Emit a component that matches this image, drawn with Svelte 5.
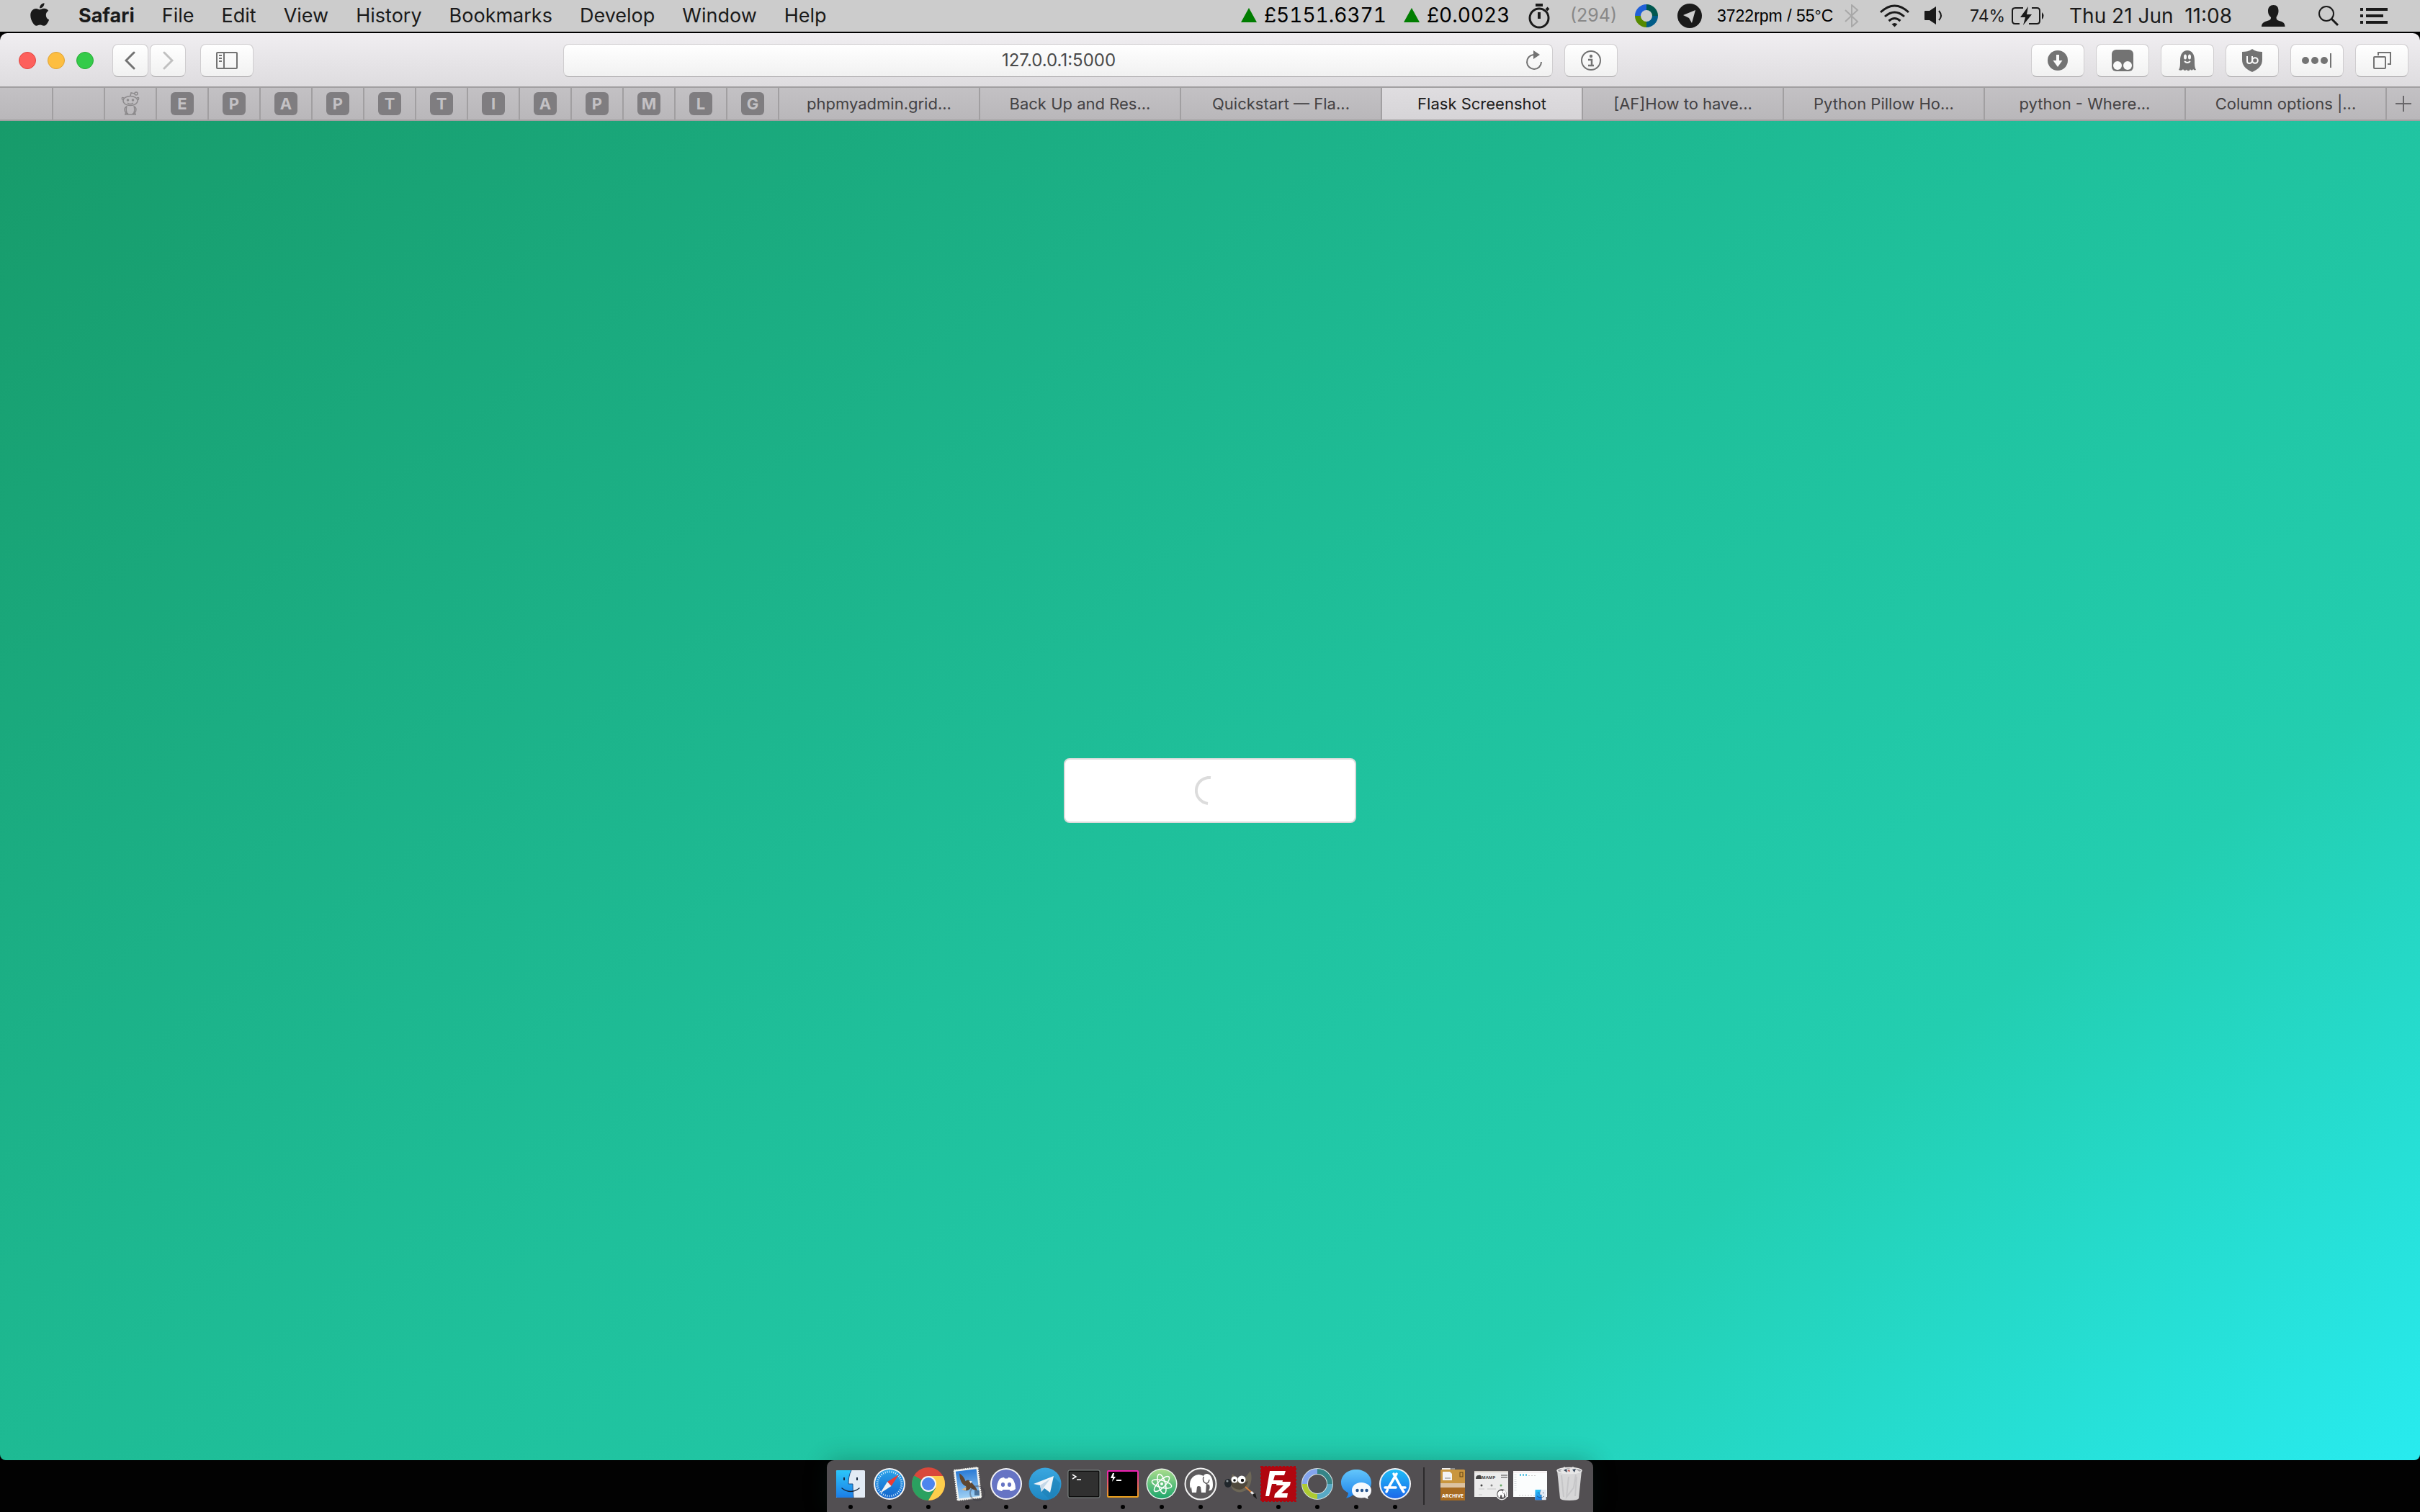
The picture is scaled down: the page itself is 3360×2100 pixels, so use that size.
<script>
  const menus = ['File', 'Edit', 'View', 'History', 'Bookmarks', 'Develop', 'Window', 'Help'];
  const pinned = ['', '', 'reddit', 'E', 'P', 'A', 'P', 'T', 'T', 'I', 'A', 'P', 'M', 'L', 'G'];
  const tabs = [
    'phpmyadmin.grid...',
    'Back Up and Res...',
    'Quickstart — Fla...',
    'Flask Screenshot',
    '[AF]How to have...',
    'Python Pillow Ho...',
    'python - Where...',
    'Column options |...'
  ];
  const active = 3;
  const extensions = ['downloads', 'tampermonkey', 'ghostery', 'ublock', 'lastpass', 'tabs'];
  const apps = [
    ['finder', true],
    ['safari', true],
    ['chrome', true],
    ['mail', true],
    ['discord', true],
    ['telegram', true],
    ['terminal', false],
    ['hyper', true],
    ['atom', true],
    ['mamp', true],
    ['gimp', true],
    ['filezilla', true],
    ['monitor', true],
    ['messages', true],
    ['appstore', true]
  ];
  const stacks = ['archive', 'mampwindow', 'finderwindow', 'trash'];
  const ticks = Array.from({ length: 36 }, (_, i) => i * 10);
  let url = $state('127.0.0.1:5000');
</script>

{#snippet extIcon(name)}
  <svg width="44" height="36" viewBox="0 0 44 36" aria-hidden="true">
    {#if name === 'downloads'}
      <circle cx="22" cy="18" r="14" fill="#737373" />
      <path d="M20 10h4v8h4.500l-6.500 9-6.500-9H20z" fill="#fafafa" />
    {:else if name === 'tampermonkey'}
      <rect x="7" y="3" width="30" height="30" rx="6" fill="#737373" />
      <circle cx="15" cy="25" r="6" fill="#fafafa" /><circle cx="29" cy="25" r="6" fill="#fafafa" />
    {:else if name === 'ghostery'}
      <path d="M10 31c2-3 2-7 2-13C12 9 16 4 22 4s10 5 10 14c0 6 0 10 2 13-2 1-3 0-4-1-1 2-3 2-4 0-1 3-4 3-5 .5-1 2-4 2-5-.5-1 2-4 2-6 1z" fill="#737373" />
      <ellipse cx="19" cy="13" rx="2" ry="3.500" fill="#fafafa" /><ellipse cx="25" cy="13" rx="2" ry="3.500" fill="#fafafa" />
      <path d="M18 19q4 4 8 0" fill="none" stroke="#fafafa" stroke-width="2" />
    {:else if name === 'ublock'}
      <path d="M22 2c4 3 9 4 14 4v11c0 8-5 13-14 17C13 30 8 25 8 17V6c5 0 10-1 14-4z" fill="#737373" />
      <path d="M15 12v7q0 3 3 3t4-3v-7" fill="none" stroke="#fafafa" stroke-width="2" />
      <circle cx="26" cy="18" r="3.800" fill="none" stroke="#fafafa" stroke-width="2" />
    {:else if name === 'lastpass'}
      <circle cx="6" cy="18" r="5" fill="#737373" /><circle cx="19" cy="18" r="5" fill="#737373" /><circle cx="32" cy="18" r="5" fill="#737373" />
      <path d="M41 8v20" stroke="#737373" stroke-width="2" />
    {:else}
      <path d="M17 11V7h17v16h-4" fill="none" stroke="#737373" stroke-width="2" />
      <rect x="11" y="13" width="16" height="16" rx="1" fill="none" stroke="#737373" stroke-width="2" />
    {/if}
  </svg>
{/snippet}

{#snippet elephant()}
  <path d="M10 31c-3-10 1-19 11-20 3 0 5 1 7 2 1-3 5-4 8-2 4 3 5 9 5 14 0 6-2 9-6 8 2-2 2-5 1-8-2 0-3-1-4-2l-1 13h-6l-1-8q-3-2-5 0l-1 8h-6l-1-8z" fill="#fff" />
  <path d="M28 14q-2 7 3 9 4 1 5-5" fill="none" stroke="#5c5a5c" stroke-width="1.500" />
{/snippet}

{#snippet finderFace()}
  <rect x="4" y="5" width="40" height="38" rx="1.500" fill="#e3ebf5" />
  <path d="M5.500 5H25c-3 6-4 12-4 19h6c0 7 0 13 1 19H5.500Q4 43 4 41.500v-35Q4 5 5.500 5z" fill="url(#finderBlue)" />
  <path d="M25 5c-3 6-4 12-4 19h6q0 10 1 19" fill="none" stroke="#1b4e8a" stroke-width="1" />
  <path d="M15 15v4M33 15v4" stroke="#16263c" stroke-width="2" />
  <path d="M12 30q12 9 24 0" fill="none" stroke="#16263c" stroke-width="1.500" stroke-linecap="round" />
{/snippet}

{#snippet dockIcon(name)}
  <svg width="50" height="50" viewBox="-1 -1 50 50" aria-hidden="true">
    {#if name === 'finder'}
      {@render finderFace()}
    {:else if name === 'safari'}
      <circle cx="24" cy="24" r="22" fill="#f4f4f6" />
      <circle cx="24" cy="24" r="20" fill="url(#safariBlue)" />
      {#each ticks as a}
        <path d="M24 5.500v3" stroke="#d8f1ff" stroke-width="1" transform="rotate({a} 24 24)" />
      {/each}
      <path d="M37 11 26.500 27 21 21z" fill="#ee3b34" /><path d="M11 37 21 21l5.500 6z" fill="#f2f2f2" />
    {:else if name === 'chrome'}
      <circle cx="24" cy="24" r="23" fill="#d9483b" />
      <path d="M24 24 4.100 12.500A23 23 0 0 0 24 47l10-17z" fill="#2aa160" />
      <path d="M24 13h20.200A23 23 0 0 1 24 47l10-17z" fill="#fdce4c" />
      <path d="M14 29 4.100 12.500 24 24z" fill="#2aa160" />
      <circle cx="24" cy="24" r="11" fill="#f5f5f5" /><circle cx="24" cy="24" r="9" fill="#4c86ee" />
    {:else if name === 'mail'}
      <g transform="rotate(-7 24 24)">
        <rect x="8" y="3" width="33" height="42" fill="#f4f4f0" stroke="#f4f4f0" stroke-width="2" stroke-dasharray="2 1" />
        <rect x="10" y="5" width="29" height="38" fill="url(#mailSky)" />
        <path d="M15 8c3 3 6 6 7 12 3-2 5-1 7 1 3 4 6 8 8 14-4-1-7-3-9-5-2 3-6 4-10 2l4-5c-6-3-8-11-7-19z" fill="#5e4630" />
        <path d="m27 20 4 1-2 3z" fill="#eee" /><path d="m15 31 7-3-1 5z" fill="#d7b98c" />
      </g>
      <circle cx="38" cy="37" r="10" fill="none" stroke="#3b3b45" stroke-opacity=".4" stroke-width="2" />
      <rect x="34" y="33" width="7" height="7" fill="#1d3a60" opacity=".6" />
    {:else if name === 'discord'}
      <circle cx="24" cy="24" r="22" fill="#f4f4f6" /><circle cx="24" cy="24" r="20" fill="#6674c4" />
      <path d="M15 17q4-2.500 6-2l1 1.500h4l1-1.500q2-.5 6 2 4 6 4 14-3 3-7 3l-1.500-2h-9L18 34q-4 0-7-3 0-8 4-14z" fill="#fff" />
      <ellipse cx="19.500" cy="25" rx="2.600" ry="2.900" fill="#6674c4" /><ellipse cx="28.500" cy="25" rx="2.600" ry="2.900" fill="#6674c4" />
    {:else if name === 'telegram'}
      <circle cx="24" cy="24" r="22.500" fill="url(#telegramBlue)" />
      <path d="m36 14 9 9-3 13-11 10-14-13z" fill="#1c7db2" opacity=".5" />
      <path d="m8 24 28-11-5 23-8-6-4 5-2-9z" fill="#f1f5f9" /><path d="m17 26 14-9-9 12-3 6z" fill="#c4d8e8" />
    {:else if name === 'terminal'}
      <rect x="3" y="6" width="42" height="36" rx="1" fill="#303030" stroke="#0d0d0d" stroke-width="2" />
      <rect x="2" y="5" width="44" height="38" rx="2" fill="none" stroke="#87908d" stroke-width="1" />
      <path d="m8 11 5 3-5 3M14 18h6" fill="none" stroke="#fff" stroke-width="1.500" />
    {:else if name === 'hyper'}
      <rect x="3" y="6" width="42" height="36" rx="1" fill="#000" stroke="url(#hyperEdge)" stroke-width="2" />
      <path d="m10 9-3 7h3l-1 5 5-7h-3l1-5z" fill="#fff" /><path d="M15 19h7" stroke="#fff" stroke-width="2" />
    {:else if name === 'atom'}
      <circle cx="24" cy="24" r="21.500" fill="#eaf4ee" /><circle cx="24" cy="24" r="20" fill="url(#atomGreen)" />
      {#each [0, 60, 120] as a}
        <ellipse cx="24" cy="24" rx="5" ry="14" fill="none" stroke="#fff" stroke-width="1.500" transform="rotate({a - 15} 24 24)" />
      {/each}
      <circle cx="24" cy="24" r="2" fill="#fff" />
    {:else if name === 'mamp'}
      <circle cx="24" cy="24" r="21.500" fill="#5c5a5c" stroke="#f4f4f4" stroke-width="2" />
      {@render elephant()}
    {:else if name === 'gimp'}
      <path d="M2 20c6 2 9 0 11-4l1-6 6 5q6 2 12 0l7-9c3 8 2 20-5 26-8 6-20 4-22-6q-6 0-8-3z" fill="#6d6757" />
      <path d="M15 20q9 6 21 0-3 11-12 12-9-1-12-7z" fill="#4f493d" />
      <circle cx="17" cy="18" r="4.500" fill="#fff" /><circle cx="27" cy="18" r="5.500" fill="#fff" />
      <circle cx="17" cy="19" r="1.800" fill="#111" /><circle cx="28" cy="19" r="2.200" fill="#111" />
      <ellipse cx="8" cy="23" rx="5" ry="6" fill="#20262b" /><circle cx="7" cy="20" r="1.600" fill="#8a949a" />
      <path d="m32 28 10 9" stroke="#d9823a" stroke-width="2" /><path d="m40 35 4 4" stroke="#eee" stroke-width="3" /><path d="m42 38 4-1 2 8-5-4z" fill="#1b1b1b" />
    {:else if name === 'filezilla'}
      <rect x="0" y="0" width="48" height="48" fill="#b1060f" stroke="#b1060f" stroke-width="2" stroke-dasharray="3 2" />
      <path d="M12 6h22l-2 6H19l-2 7h13l-1 5H15l-4 17H6z" fill="#fff" />
      <path d="M22 21h19l-1 5-12 11h9l-1 6H18l1-5 12-12H21z" fill="#fff" />
    {:else if name === 'monitor'}
      <circle cx="24" cy="24" r="17.500" fill="none" stroke="#d6e2e2" stroke-width="9" />
      <path d="M24 6.500A17.500 17.500 0 0 1 41.500 24" fill="none" stroke="#358487" stroke-width="7" />
      <path d="M41.500 24A17.500 17.500 0 0 1 24 41.500" fill="none" stroke="#58a9c6" stroke-width="7" />
      <path d="M24 41.500A17.500 17.500 0 0 1 6.500 24" fill="none" stroke="#aecb32" stroke-width="7" />
      <path d="M6.500 24A17.500 17.500 0 0 1 24 6.500" fill="none" stroke="#84a5ee" stroke-width="7" />
    {:else if name === 'messages'}
      <path d="M24 4c12 0 21 8 21 18S36 40 24 40q-3 0-5-.5-3 3-9 4 3-3 3-7C6 33 3 28 3 22 3 12 12 4 24 4z" fill="url(#messageBlue)" />
      <path d="M31 22c8 0 14 5 14 11 0 4-2 7-5 9 0 1 0 2 1 3q-4-1-5-2c-11 2-18-3-18-10 0-6 5-11 13-11z" fill="#f7f9fc" />
      <circle cx="25.500" cy="33" r="2.200" fill="#27548d" /><circle cx="32" cy="33" r="2.200" fill="#27548d" /><circle cx="38.500" cy="33" r="2.200" fill="#27548d" />
    {:else if name === 'appstore'}
      <circle cx="24" cy="24" r="22" fill="#f4f4f6" /><circle cx="24" cy="24" r="20" fill="url(#storeBlue)" />
      <path d="M26 10 15.500 28M13.500 32 12 35M22 10l12 22 2 3M10 29h15M32 29h6" fill="none" stroke="#fff" stroke-width="3.500" stroke-linecap="round" />
    {:else if name === 'archive'}
      <path d="M9 2h12v4H9z" fill="#efefef" /><path d="M22 2h5v4h-5z" fill="#8c8c8c" />
      <rect x="7" y="4" width="34" height="43" rx="1.500" fill="#c9963f" />
      <rect x="7" y="28" width="34" height="19" rx="1.500" fill="#a76b22" />
      <rect x="7" y="23" width="34" height="6" fill="#dcc3a2" />
      <path d="M10 7h10l3 3v9H10z" fill="#f3f3f3" /><path d="M13 16h8" stroke="#bbb" stroke-width="2" />
      <rect x="34" y="8" width="4" height="6" fill="none" stroke="#604315" />
      <text x="24" y="43" text-anchor="middle" class="archive-label">ARCHIVE</text>
    {:else if name === 'mampwindow'}
      <rect x="0" y="6" width="47" height="36" fill="#ececec" /><path d="M0 7h47" stroke="#d5cfc9" stroke-width="2" />
      <path d="M2 17q0-5 4-5 4-1 4 4v1z" fill="#444" />
      <text x="10" y="17" class="mamp-label">MAMP</text>
      <path d="M37 12h9M37 15h9" stroke="#999" stroke-width="2" />
      <circle cx="10" cy="26" r="1.500" fill="#444" /><circle cx="24" cy="26" r="1.500" fill="#888" /><circle cx="37" cy="26" r="1.500" fill="#67a867" />
      <path d="M6 31h8M18 31h12M34 31h5M6 39h5" stroke="#c6c6c6" />
      <g transform="translate(29 29) scale(.38)"><circle cx="24" cy="24" r="20" fill="#4c4a4c" stroke="#eee" stroke-width="4" />{@render elephant()}</g>
    {:else if name === 'finderwindow'}
      <rect x="0" y="6" width="47" height="36" fill="#fbfdfd" /><path d="M0 7.500h47" stroke="#ead9dd" stroke-width="1" />
      <path d="M3 11v24" stroke="#d8dde0" stroke-width="3" stroke-dasharray="1 2" />
      <path d="M9 11.500h10" stroke="#65c6e4" stroke-width="3" stroke-dasharray="2 2" /><path d="M21 12.500h11M8 40h22" stroke="#ccc" stroke-dasharray="2 2" />
      <g transform="translate(29 30) scale(.38)">{@render finderFace()}</g>
    {:else}
      <path d="M7 5h34l-4 39q-1 3-13 3t-13-3z" fill="#d6d6d7" />
      <path d="m13 12 3 30M23 14l-3 28 10-13 3-18M34 14l-2 27" fill="none" stroke="#c6c6c8" stroke-width="2" />
      <ellipse cx="24" cy="5.500" rx="17" ry="4" fill="#a5a5a8" stroke="#ececec" stroke-width="1.500" />
      <path d="m11 6 6-6 5 4 7-4 5 4 4 3-6 3H17z" fill="#e6e6e6" /><path d="m16 5 4-2 1 5zM28 4l5-1-2 5z" fill="#36465a" /><path d="m21 6 3-2 1 3z" fill="#c1574c" />
    {/if}
  </svg>
{/snippet}

<svg class="defs" width="0" height="0" aria-hidden="true">
  <defs>
    <linearGradient id="finderBlue" x1="0" y1="0" x2="0" y2="1"><stop offset="0" stop-color="#2bc6fa" /><stop offset="1" stop-color="#1c7de6" /></linearGradient>
    <linearGradient id="safariBlue" x1="0" y1="0" x2="0" y2="1"><stop offset="0" stop-color="#2aa3ea" /><stop offset="1" stop-color="#1464cc" /></linearGradient>
    <linearGradient id="mailSky" x1="0" y1="0" x2="0" y2="1"><stop offset="0" stop-color="#2a7bd6" /><stop offset="1" stop-color="#9fd0f4" /></linearGradient>
    <linearGradient id="telegramBlue" x1="0" y1="0" x2="0" y2="1"><stop offset="0" stop-color="#3aa7e0" /><stop offset="1" stop-color="#1f87c2" /></linearGradient>
    <linearGradient id="hyperEdge" x1="0" y1="0" x2="0" y2="1"><stop offset="0" stop-color="#ee1fb4" /><stop offset="1" stop-color="#eca11c" /></linearGradient>
    <linearGradient id="atomGreen" x1="0" y1="0" x2="0" y2="1"><stop offset="0" stop-color="#a8dc8c" /><stop offset="1" stop-color="#1ea66c" /></linearGradient>
    <linearGradient id="messageBlue" x1="0" y1="0" x2="0" y2="1"><stop offset="0" stop-color="#63c6fb" /><stop offset="1" stop-color="#1d82ec" /></linearGradient>
    <linearGradient id="storeBlue" x1="0" y1="0" x2="0" y2="1"><stop offset="0" stop-color="#1fbdf8" /><stop offset="1" stop-color="#1c68ea" /></linearGradient>
  </defs>
</svg>

<div class="desktop">
  <header class="menubar">
    <nav class="menus" aria-label="Menu bar">
      <button class="menu" aria-label="Apple">
        <svg width="29" height="32" viewBox="2 0 22 24"><path fill="#1a1a1a" d="M12.152 6.896c-.948 0-2.415-1.078-3.960-1.040-2.040.027-3.910 1.183-4.961 3.014-2.117 3.675-.546 9.103 1.519 12.090 1.013 1.454 2.208 3.090 3.792 3.039 1.520-.065 2.090-.987 3.935-.987 1.831 0 2.350.987 3.960.948 1.637-.026 2.676-1.480 3.676-2.948 1.156-1.688 1.636-3.325 1.662-3.415-.039-.013-3.182-1.221-3.220-4.857-.026-3.040 2.480-4.494 2.597-4.559-1.429-2.090-3.623-2.324-4.390-2.376-2-.156-3.675 1.090-4.610 1.090zM15.530 3.830c.843-1.012 1.400-2.427 1.245-3.830-1.207.052-2.662.805-3.532 1.818-.780.896-1.454 2.338-1.273 3.714 1.338.104 2.715-.688 3.559-1.701" /></svg>
      </button>
      <button class="menu app">Safari</button>
      {#each menus as m}<button class="menu">{m}</button>{/each}
    </nav>
    <div class="status">
      <span class="price wide"><svg width="22" height="20" viewBox="0 0 22 20"><path d="M11 0l11 20H0z" fill="#007d00" /></svg>£5151.6371</span>
      <span class="price"><svg width="22" height="20" viewBox="0 0 22 20"><path d="M11 0l11 20H0z" fill="#007d00" /></svg>£0.0023</span>
      <svg width="38" height="36" viewBox="0 0 38 36" aria-hidden="true"><circle cx="15" cy="21" r="13" fill="none" stroke="#1a1a1a" stroke-width="3" /><path d="M10 3h10M15 13v9M25 10l3-3" stroke="#1a1a1a" stroke-width="4" /></svg>
      <span class="count">(294)</span>
      <svg width="39" height="32" viewBox="0 0 39 32" aria-hidden="true">
        <g fill="none" stroke-width="8"><path d="M16 4a12 12 0 0 1 12 12" stroke="#00584f" /><path d="M28 16a12 12 0 0 1-12 12" stroke="#005c88" /><path d="M16 28A12 12 0 0 1 4 16" stroke="#568a00" /><path d="M4 16A12 12 0 0 1 16 4" stroke="#2060d8" /></g>
      </svg>
      <svg width="35" height="34" viewBox="0 0 35 34" aria-hidden="true"><circle cx="17" cy="17" r="17" fill="#1a1a1a" /><path d="m25 9-5 18-4-7-8-4z" fill="#cecece" /></svg>
      <span class="temp">3722rpm / 55°C</span>
      <svg width="29" height="32" viewBox="0 0 29 32" aria-hidden="true"><path d="m1 8 17 16-8 7V1l8 7L1 24" fill="none" stroke="#a8a8a8" stroke-width="2" /></svg>
      <svg width="41" height="32" viewBox="0 0 41 32" aria-hidden="true"><g fill="none" stroke="#1a1a1a" stroke-width="3"><path d="M1 11q19.500-18 39 0" /><path d="M7 17q13.500-12 27 0" /><path d="M12.500 23q8-7 16 0" /></g><path d="m16.500 27.500 4 4 4-4q-4-3-8 0z" fill="#1a1a1a" /></svg>
      <svg width="44" height="28" viewBox="0 0 44 28" aria-hidden="true"><path d="M1 8q0-1 1-1h6l9-6v25l-9-6H2q-1 0-1-1z" fill="#1a1a1a" /><path d="M21 7q6 7 0 13" fill="none" stroke="#1a1a1a" stroke-width="2" /></svg>
      <span class="battery">74%<svg width="48" height="26" viewBox="0 0 48 26" aria-hidden="true"><path d="M17 2H6Q2 2 2 6v14q0 4 4 4h6M29 2h7q4 0 4 4v14q0 4-4 4H25" fill="none" stroke="#1a1a1a" stroke-width="2" /><path d="M24 0 13 15h7l-3 11 12-15h-7z" fill="#1a1a1a" /><path d="M43 8q5 5 0 10z" fill="#1a1a1a" /></svg></span>
      <time class="clock">Thu 21 Jun&nbsp; 11:08</time>
      <svg width="58" height="30" viewBox="0 0 58 30" aria-hidden="true"><path d="M16.500 0c5 0 7 3 7 8s-2 7-3 9c0 3 1 4 4 5 5 1 8 3 8 8H0c0-5 4-7 8-8 4-1 5-2 5-5-2-2-4-4-4-9s3-8 7.500-8z" fill="#1a1a1a" /></svg>
      <svg width="39" height="30" viewBox="0 0 39 30" aria-hidden="true"><circle cx="12" cy="12" r="10" fill="none" stroke="#1a1a1a" stroke-width="2" /><path d="m19 19 9 9" stroke="#1a1a1a" stroke-width="3" /></svg>
      <svg width="38" height="22" viewBox="0 0 38 22" aria-hidden="true"><path d="M0 2h4M0 11h4M0 20h4M8 2h30M8 11h24M8 20h30" stroke="#1a1a1a" stroke-width="4" /></svg>
    </div>
  </header>

  <main class="window">
    <div class="toolbar">
      <div class="lights">
        <button class="light close" aria-label="Close"></button>
        <button class="light minimise" aria-label="Minimise"></button>
        <button class="light zoom" aria-label="Zoom"></button>
      </div>
      <div class="history">
        <button class="tool arrow" aria-label="Back"><svg width="16" height="26" viewBox="0 0 16 26"><path d="M13 2 2 13l11 11" fill="none" stroke="#737373" stroke-width="3" stroke-linecap="round" /></svg></button>
        <button class="tool arrow" aria-label="Forward"><svg width="16" height="26" viewBox="0 0 16 26"><path d="m3 2 11 11L3 24" fill="none" stroke="#c0c0c0" stroke-width="3" stroke-linecap="round" /></svg></button>
      </div>
      <button class="tool" aria-label="Sidebar"><svg width="30" height="24" viewBox="0 0 30 24"><rect x="1" y="1" width="28" height="22" rx="1" fill="none" stroke="#737373" stroke-width="2" /><path d="M11 1v22M4 5h4M4 9h4M4 13h4" stroke="#737373" stroke-width="2" /></svg></button>
      <div class="space-left"></div>
      <div class="address">
        <input aria-label="Address" bind:value={url} />
        <button class="reload" aria-label="Reload"><svg width="26" height="28" viewBox="0 0 26 28"><path d="M12 6A10 10 0 1 0 23 16" fill="none" stroke="#737373" stroke-width="2" /><path d="m12 0 9 6-9 6z" fill="#737373" /></svg></button>
      </div>
      <button class="tool info" aria-label="Site information"><svg width="28" height="28" viewBox="0 0 28 28"><circle cx="14" cy="14" r="13" fill="none" stroke="#737373" stroke-width="2" /><circle cx="14" cy="8" r="2.200" fill="#737373" /><path d="M10 13h5v8M10 21h8" fill="none" stroke="#737373" stroke-width="2.500" /></svg></button>
      <div class="space-right"></div>
      <div class="extensions">
        {#each extensions as e}<button class="tool" aria-label={e}>{@render extIcon(e)}</button>{/each}
      </div>
    </div>

    <div class="tabbar" role="tablist">
      {#each pinned as p}
        <button class="tab pin" role="tab" aria-selected="false" aria-label="Pinned {p}">
          {#if p === 'reddit'}
            <svg width="26" height="34" viewBox="0 0 26 34"><g fill="none" stroke="#8c8a8c" stroke-width="1.500"><ellipse cx="13" cy="13" rx="10" ry="6.500" /><path d="M13 6l1-4 5 1M4 9Q0 7 2 12M22 9q4-2 2 3M9 16q4 3 8 0M8 20q-2 7 1 11M18 20q2 7-1 11M7 21q-4 4 0 9M19 21q4 4 0 9M5 32h16M6 32q0-3 4-1M20 32q0-3-4-1" /><circle cx="21" cy="3" r="2" /></g><circle cx="9.500" cy="12" r="1.800" fill="#8c8a8c" /><circle cx="16.500" cy="12" r="1.800" fill="#8c8a8c" /></svg>
          {:else if p}
            <span class="favicon">{p}</span>
          {/if}
        </button>
      {/each}
      {#each tabs as t, i}
        <button class="tab" class:active={i === active} role="tab" aria-selected={i === active}>{t}</button>
      {/each}
      <button class="newtab" aria-label="New tab"><svg width="22" height="22" viewBox="0 0 22 22"><path d="M11 0v22M0 11h22" stroke="#69676a" stroke-width="2" /></svg></button>
    </div>

    <section class="page">
      <div class="card" role="status" aria-label="Loading">
        <svg width="42" height="40" viewBox="0 0 42 40"><path d="M22 2A18 18 0 1 0 18 38" fill="none" stroke="#dcdcdc" stroke-width="4" /></svg>
      </div>
    </section>
  </main>

  <footer class="shelf">
    <div class="dock">
      {#each apps as [name, running]}
        <button class="app-icon" class:running aria-label={name}>{@render dockIcon(name)}</button>
      {/each}
      <span class="divider"></span>
      {#each stacks as name}
        <button class="app-icon" aria-label={name}>{@render dockIcon(name)}</button>
      {/each}
    </div>
  </footer>
</div>

<style>
  :global(body) { margin: 0; background: #020202; }
  .defs { position: absolute; }
  .desktop {
    display: flex; flex-direction: column; min-height: 100vh;
    font-family: Inter, "Liberation Sans", sans-serif; color: #1a1a1a; background: #020202;
  }
  button, input { font: inherit; color: inherit; border: 0; padding: 0; margin: 0; background: none; }
  svg { display: block; flex: none; }

  .menubar {
    display: flex; justify-content: space-between; align-items: center; height: 44px;
    padding: 0 45px 0 42px; background: #cccccc; border-bottom: 2px solid #000;
    font-size: 27px; line-height: 40px; white-space: nowrap;
  }
  .menus { display: flex; align-items: center; gap: 38px; }
  .menu svg { margin-bottom: 4px; }
  .app { font-weight: 700; }
  .status { display: flex; align-items: center; gap: 20px; }
  .price {
    display: flex; align-items: center; gap: 10px; width: 153px; color: #000;
    font-size: 28px; font-variant-numeric: tabular-nums; padding-bottom: 2px;
  }
  .wide { width: 206px; }
  .count { width: 70px; color: #888; font-size: 25px; padding-bottom: 2px; }
  .temp { width: 157px; font-family: "Liberation Sans", sans-serif; font-size: 23px; color: #000; }
  .battery { display: flex; align-items: center; gap: 8px; width: 118px; font-size: 23px; }
  .clock { width: 247px; font-size: 28px; }

  .window {
    display: flex; flex-direction: column; flex: 1; overflow: hidden; border-radius: 10px 10px 8px 8px;
  }
  .toolbar {
    display: flex; align-items: center; height: 72px; padding: 2px 16px 0 26px;
    background: linear-gradient(#f0eef1, #dedcdf); border-bottom: 2px solid #a19fa1;
  }
  .lights { display: flex; gap: 16px; margin-right: 26px; }
  .light { width: 24px; height: 24px; border-radius: 50%; border: 1px solid #e0443e; background: #fd605c; }
  .minimise { background: #fdbe41; border-color: #dea236; }
  .zoom { background: #34cb4a; border-color: #27aa35; }
  .history { display: flex; gap: 2px; margin-right: 20px; }
  .tool, .address {
    box-sizing: border-box; height: 46px; border-radius: 8px; border: 1px solid #cfcdcf; border-bottom-color: #aaa8aa;
    background: linear-gradient(#ffffff, #f1f1f1);
  }
  .tool { display: flex; align-items: center; justify-content: center; width: 74px; flex: none; }
  .arrow { width: 50px; }
  .space-left { flex: 430; }
  .space-right { flex: 574; }
  .address { display: flex; align-items: center; flex: 1322; padding: 0 12px 0 40px; margin-right: 16px; }
  .address input { flex: 1; min-width: 0; text-align: center; font-size: 24px; line-height: 32px; color: #4a4a4a; outline: 0; }
  .extensions { display: flex; gap: 16px; }

  .tabbar {
    display: flex; height: 44px; padding-left: 2px; border-bottom: 2px solid #a19fa1;
    background: linear-gradient(#c3c1c4, #b9b7ba);
  }
  .tab {
    display: flex; align-items: center; justify-content: center; flex: 1; min-width: 0; box-sizing: border-box;
    border-right: 2px solid #a19fa1; font-size: 22px; line-height: 32px; color: #444244; white-space: nowrap;
  }
  .pin { flex: none; width: 72px; }
  .active { background: linear-gradient(#dfdde0, #d6d4d7); color: #1c1c1c; }
  .favicon {
    width: 32px; height: 32px; border-radius: 6px; background: #7f7d80; color: #c3c1c4;
    font-size: 22px; line-height: 32px; font-weight: 700; text-align: center;
  }
  .newtab { display: flex; align-items: center; justify-content: center; width: 46px; flex: none; }

  .page {
    display: flex; flex: 1; align-items: center; justify-content: center;
    background: linear-gradient(143deg, #179b6a 0%, #1fc09b 50%, #23ceb0 75%, #28ebef 100%);
  }
  .card {
    display: flex; align-items: center; justify-content: center; box-sizing: border-box;
    width: 406px; height: 90px; border: 2px solid #dcdcdc; border-radius: 8px; background: #fff;
  }

  .shelf { display: flex; justify-content: center; height: 72px; }
  .dock {
    display: flex; box-sizing: border-box; padding: 0 6px; background: #524f52; border-radius: 10px 10px 0 0;
    box-shadow: 0 0 32px rgba(0, 40, 30, 0.3);
  }
  .app-icon { display: flex; flex-direction: column; align-items: center; gap: 4px; width: 54px; padding-top: 8px; }
  .running::after { content: ""; width: 6px; height: 6px; border-radius: 50%; background: #000; }
  .divider { width: 2px; height: 52px; margin: 10px 12px; background: #2c2a2c; }
  .archive-label { font: 700 7px "Open Sans", sans-serif; fill: #fff; }
  .mamp-label { font: 700 6px "Open Sans", sans-serif; fill: #444; }
</style>
